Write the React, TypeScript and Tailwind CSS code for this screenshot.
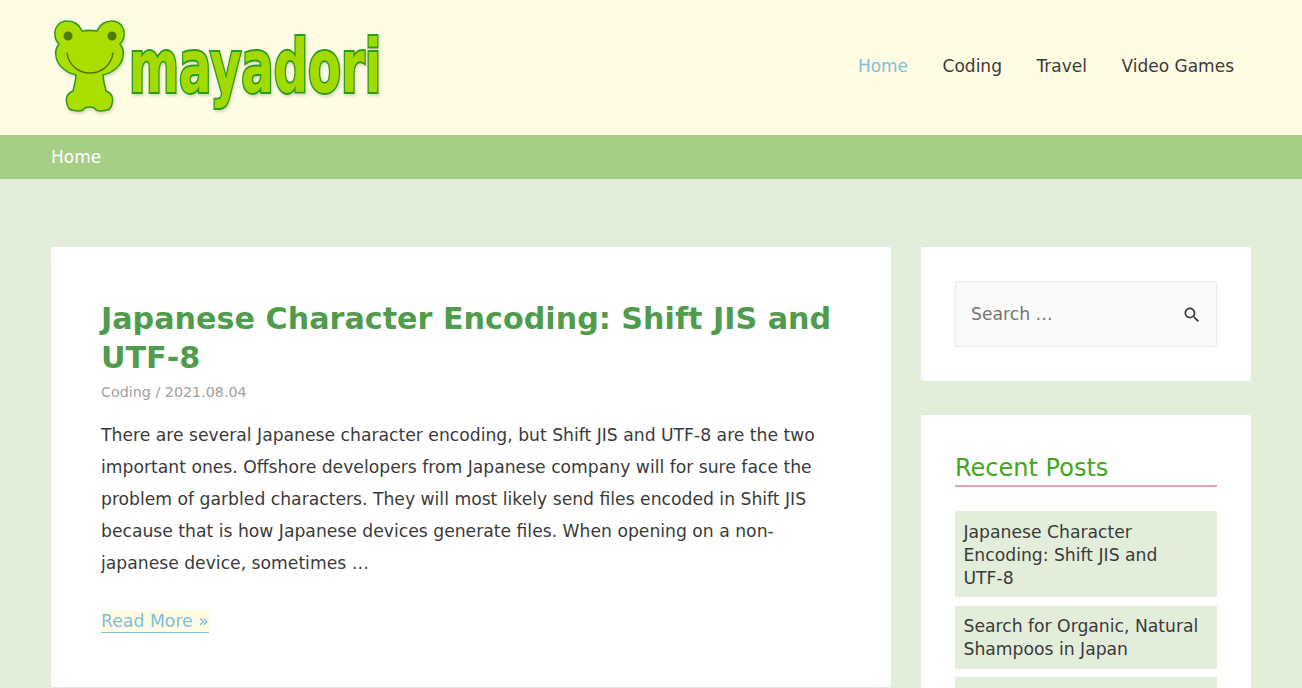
const navItems = ["Home", "Coding", "Travel", "Video Games"];

const recentPosts = [
  "Japanese Character Encoding: Shift JIS and UTF‑8",
  "Search for Organic, Natural Shampoos in Japan",
];

const Logo = () => (
  <svg width="340" height="104" viewBox="0 0 340 104" className="block">
    <defs>
      <filter id="soft" x="-10%" y="-10%" width="120%" height="120%">
        <feDropShadow dx="1" dy="2" stdDeviation="1.5" floodColor="#8a8a6a" floodOpacity="0.35" />
      </filter>
    </defs>
    <path
      filter="url(#soft)"
      fill="#a9de00"
      stroke="#2c9c1c"
      strokeWidth="1.5"
      d="M30 11 C36 10 39 10 45 11 C48 4 54 1 60 1 C68 1 73 8 72 15 C72 19 70 22 68 24 C71 28 72 32 71 36 C70 46 60 53 51 55 C51 60 53 66 54 71 C60 73 62 79 60 84 C59 88 57 90 55 90 C51 91 46 91 44 90 C43 88 41 87 37.5 87 C34 87 32 88 31 90 C29 91 24 91 20 90 C18 90 16 88 15 84 C13 79 15 73 21 71 C22 66 24 60 24 55 C15 53 5 46 4 36 C3 32 4 28 7 24 C5 22 3 19 3 15 C2 8 7 1 15 1 C21 1 27 4 30 11 Z"
    />
    <circle cx="16" cy="16" r="4.5" fill="#4f7a05" />
    <circle cx="60" cy="16" r="4.5" fill="#4f7a05" />
    <path d="M15 33 C17 46 27 53 38 53 C49 53 59 46 61 33" fill="none" stroke="#4f7a05" strokeWidth="1.5" strokeLinecap="round" />
    <g filter="url(#soft)">
      <text
        transform="translate(77 72) scale(0.632 0.97)"
        fontFamily="'DejaVu Sans', sans-serif"
        fontWeight="700"
        fontSize="76"
        fill="#a2da00"
        stroke="#2c9c1c"
        strokeWidth="4"
        strokeLinejoin="miter"
        paintOrder="stroke"
      >
        mayadori
      </text>
    </g>
  </svg>
);

const SearchIcon = () => (
  <svg width="20" height="20" viewBox="0 0 24 24" fill="#3a3a3a" className="mt-[2px]">
    <path d="M15.5 14h-.79l-.28-.27C15.41 12.59 16 11.11 16 9.5 16 5.91 13.09 3 9.5 3S3 5.91 3 9.5 5.91 16 9.5 16c1.61 0 3.09-.59 4.23-1.57l.27.28v.79l5 4.99L20.49 19l-4.99-5zm-6 0C7.01 14 5 11.99 5 9.5S7.01 5 9.5 5 14 7.01 14 9.5 11.99 14 9.5 14z" />
  </svg>
);

export default function App() {
  return (
    <div className="h-[688px] overflow-hidden bg-[#e2eeda] font-['DejaVu_Sans',sans-serif] text-[#3a3a3a]">
      <header className="flex h-[135px] items-center justify-between bg-[#fffce3] pl-[51px] pr-[68px]">
        <div className="pl-[1px] pt-[9px]">
          <Logo />
        </div>
        <nav className="mb-[2px] flex gap-[34.5px] text-[17px]">
          {navItems.map((item, i) => (
            <a key={item} className={i === 0 ? "text-[#7fbfdc]" : "text-[#3a3a3a]"}>
              {item}
            </a>
          ))}
        </nav>
      </header>

      <div className="flex h-11 items-center bg-[#a6ce86] px-[51px] pt-[2px] text-[17px] text-white">Home</div>

      <main className="flex items-start gap-[30px] px-[51px] pt-[68px]">
        <article className="h-[441px] w-[840px] rounded-[3px] border-b border-[#e6e6e6] bg-white px-[50px] pt-[52px]">
          <h1 className="text-[30.2px] font-bold leading-[39px] text-[#4e9c4c]">
            Japanese Character Encoding: Shift JIS and UTF‑8
          </h1>
          <p className="mt-[5px] text-[14.3px] leading-[20px] text-[#a0a0a0]">Coding / 2021.08.04</p>
          <p className="mt-[17px] text-[17.2px] leading-[32px]">
            There are several Japanese character encoding, but Shift JIS and UTF-8 are the two important ones.
            Offshore developers from Japanese company will for sure face the problem of garbled characters. They
            will most likely send files encoded in Shift JIS because that is how Japanese devices generate files.
            When opening on a non-japanese device, sometimes …
          </p>
          <a className="mt-[31px] inline-block border-b border-[#7fbfdc] bg-[#fffce3] text-[17.3px] leading-[22px] text-[#7fbfdc]">
            Read More »
          </a>
        </article>

        <aside className="flex w-[330px] flex-col gap-[34px]">
          <section className="rounded-[3px] bg-white p-[34px]">
            <div className="flex h-[66px] items-center justify-between rounded-[2px] border border-[#eaeaea] bg-[#fafafa] pl-[15px] pr-[14px] text-[17.2px] text-[#757575]">
              <span className="pt-[1px]">Search …</span>
              <SearchIcon />
            </div>
          </section>

          <section className="rounded-[3px] bg-white px-[34px] pt-[36px] pb-[34px]">
            <h2 className="border-b-2 border-[#e79dbd] text-2xl leading-[34px] text-[#41a81a]">Recent Posts</h2>
            <ul className="mt-6 flex flex-col gap-[8.5px]">
              {recentPosts.map(post => (
                <li key={post} className="bg-[#e2eeda] pl-[8.5px] pr-[8px] pt-[9.5px] pb-[7.5px] text-[17.2px] leading-[23px]">
                  {post}
                </li>
              ))}
              <li className="h-[63px] bg-[#e2eeda]" />
            </ul>
          </section>
        </aside>
      </main>
    </div>
  );
}
